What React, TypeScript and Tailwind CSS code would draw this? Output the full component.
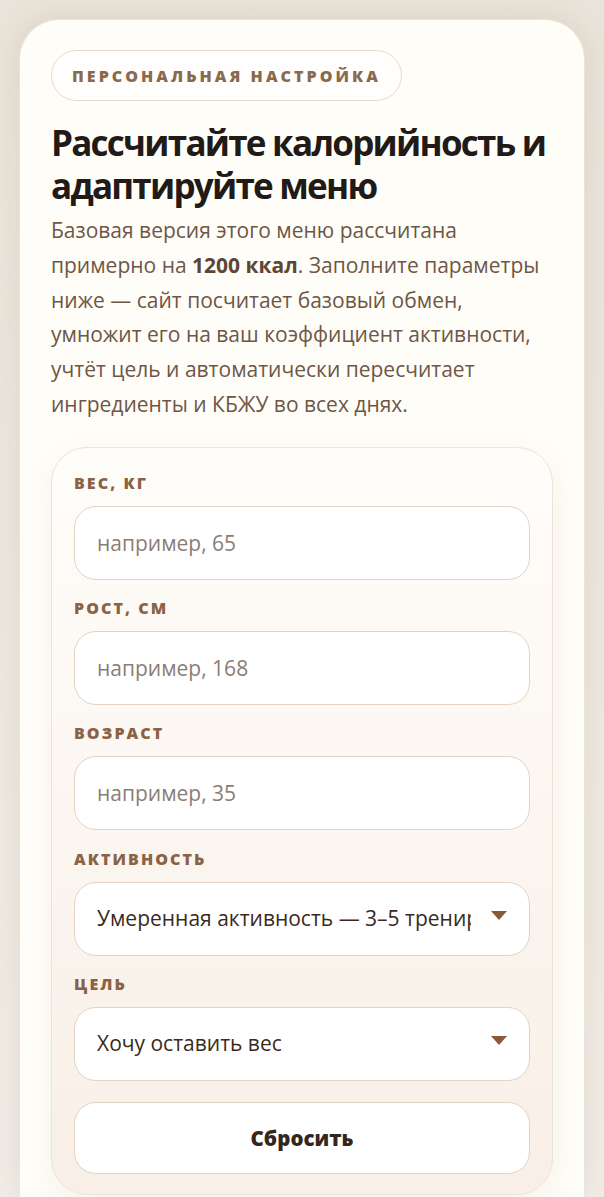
import React from 'react';

const labelCls =
  'text-[16px] font-extrabold uppercase tracking-[0.13em] text-[#8a6245] leading-none';
const inputCls =
  'h-[74px] w-full rounded-[22px] border border-[#e4d3c3] bg-white px-[22px] text-[21px] text-[#3a2a20] placeholder:text-[#8b7d74] outline-none';

function Field({ label, placeholder }: { label: string; placeholder: string }) {
  return (
    <div className="flex flex-col gap-[15px]">
      <span className={labelCls}>{label}</span>
      <input className={inputCls} placeholder={placeholder} />
    </div>
  );
}

function SelectField({ label, value }: { label: string; value: string }) {
  return (
    <div className="flex flex-col gap-[15px]">
      <span className={labelCls}>{label}</span>
      <div className="flex h-[74px] w-full items-center rounded-[22px] border border-[#e4d3c3] bg-white pl-[22px] pr-[22px]">
        <span className="mr-[20px] flex-1 overflow-hidden whitespace-nowrap text-[21px] text-[#3a2a20]">
          {value}
        </span>
        <svg width="16" height="9" viewBox="0 0 16 9" className="shrink-0 -mt-[6px]">
          <path d="M0 0 H16 L8 9 Z" fill="#8a5a38" />
        </svg>
      </div>
    </div>
  );
}

export default function App() {
  return (
    <div
      className="min-h-[1197px] bg-gradient-to-b from-[#e9e3d9] to-[#f1ede7] px-[19px] pt-[19px]"
      style={{ fontFamily: '"Open Sans", "Noto Sans", sans-serif' }}
    >
      <div className="h-[1178px] overflow-hidden rounded-t-[40px] border border-b-0 border-[#ede3d6] bg-[#fffdf8] px-[31px] pt-[30px] shadow-[0_0_30px_rgba(120,90,50,0.12)]">
        <div className="inline-flex h-[51px] items-center rounded-full border border-[#e5d8cb] bg-white/60 px-[20px]">
          <span className="text-[16px] font-extrabold uppercase tracking-[0.19em] text-[#8a6a4c]">
            Персональная настройка
          </span>
        </div>

        <h1 className="mt-[20px] text-[35px] font-bold leading-[43px] tracking-[-0.05em] text-[#211a16]">
          Рассчитайте калорийность и адаптируйте меню
        </h1>

        <p className="mt-[6px] text-[21px] leading-[34.8px] text-[#6e5646]">
          Базовая версия этого меню рассчитана примерно на{' '}
          <b className="font-bold text-[#5e4535]">1200 ккал</b>. Заполните параметры ниже — сайт
          посчитает базовый обмен, умножит его на ваш коэффициент активности, учтёт цель и
          автоматически пересчитает ингредиенты и КБЖУ во всех днях.
        </p>

        <div className="mt-[25px] flex h-[748px] flex-col gap-[20.3px] rounded-[36px] border border-[#eee2d6] bg-gradient-to-b from-[#fffdfa] to-[#f8efe7] px-[22px] pt-[27px] shadow-[0_8px_30px_rgba(140,100,60,0.08)]">
          <Field label="Вес, кг" placeholder="например, 65" />
          <Field label="Рост, см" placeholder="например, 168" />
          <Field label="Возраст" placeholder="например, 35" />
          <SelectField label="Активность" value="Умеренная активность — 3–5 тренировок в неделю" />
          <SelectField label="Цель" value="Хочу оставить вес" />
          <button className="mt-[1px] h-[72px] w-full shrink-0 rounded-[22px] border border-[#e4d3c3] bg-white text-[20.5px] font-extrabold text-[#35261d]">
            Сбросить
          </button>
        </div>
      </div>
    </div>
  );
}
